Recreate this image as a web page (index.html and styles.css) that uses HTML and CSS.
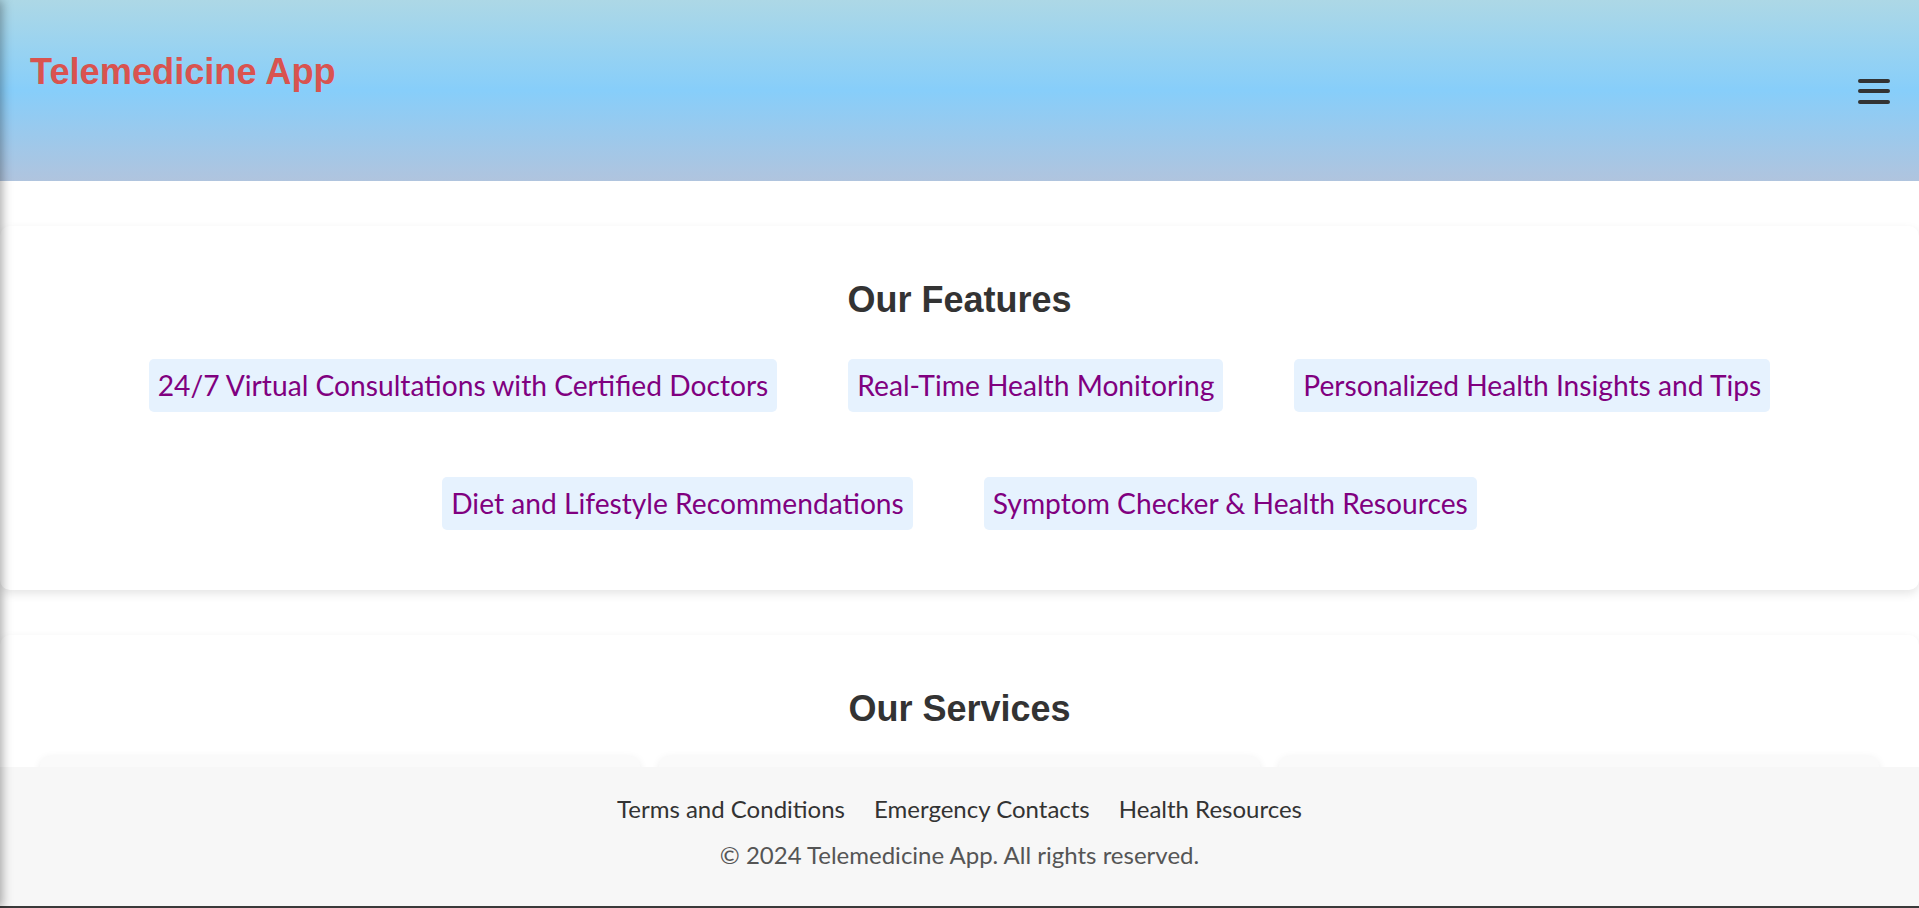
FILE: index.html
```html
<!DOCTYPE html>
<html lang="en">
<head>
<meta charset="utf-8">
<title>Telemedicine App</title>
<link rel="stylesheet" href="styles.css">
</head>
<body>
<aside class="sidenav" aria-hidden="true"></aside>
<header class="site-header">
  <h1 class="brand">Telemedicine App</h1>
  <button class="menu-btn" aria-label="Menu">
    <svg width="32" height="28" viewBox="0 0 32 28"><g stroke="#333" stroke-width="4" stroke-linecap="round"><line x1="2" y1="4" x2="30" y2="4"/><line x1="2" y1="14" x2="30" y2="14"/><line x1="2" y1="25" x2="30" y2="25"/></g></svg>
  </button>
</header>
<main class="content">
  <section class="card">
    <h2 class="card-title">Our Features</h2>
    <ul class="feature-list">
      <li class="feature">24/7 Virtual Consultations with Certified Doctors</li>
      <li class="feature">Real-Time Health Monitoring</li>
      <li class="feature">Personalized Health Insights and Tips</li>
      <li class="feature">Diet and Lifestyle Recommendations</li>
      <li class="feature">Symptom Checker &amp; Health Resources</li>
    </ul>
  </section>
  <section class="card">
    <h2 class="card-title">Our Services</h2>
    <div class="service-grid">
      <article class="service"></article>
      <article class="service"></article>
      <article class="service"></article>
    </div>
  </section>
</main>
<footer class="site-footer">
  <nav class="footer-links">
    <a href="#">Terms and Conditions</a>
    <a href="#">Emergency Contacts</a>
    <a href="#">Health Resources</a>
  </nav>
  <p class="copy">© 2024 Telemedicine App. All rights reserved.</p>
</footer>
</body>
</html>
```

FILE: styles.css
```css
* { box-sizing: border-box; }
html, body { margin: 0; padding: 0; }
body {
  font-family: "Lato", "Open Sans", sans-serif;
  background: #fff;
  color: #333;
  padding-bottom: 160px;
}
.sidenav {
  position: fixed;
  top: 0;
  left: -250px;
  width: 250px;
  height: 100%;
  background: #fff;
  box-shadow: 2px 0 10px rgba(0,0,0,0.35);
  z-index: 20;
}
.site-header {
  height: 181px;
  padding: 0 29px 0 30px;
  display: flex;
  justify-content: space-between;
  align-items: center;
  background: linear-gradient(to bottom, #add8e6, #87cefa, #b0c4de);
}
.brand {
  align-self: flex-start;
  margin: 51px 0 0;
  font-family: "Liberation Sans", Arial, sans-serif;
  font-weight: bold;
  font-size: 36.2px;
  line-height: normal;
  color: #d9534f;
}
.menu-btn {
  background: none;
  border: 0;
  padding: 0;
  width: 32px;
  height: 28px;
  display: flex;
}
.content { padding: 0; }
.card {
  margin: 45px 0;
  padding: 54px 0 60px;
  background: #fff;
  border-radius: 10px;
  box-shadow: 0 4px 10px rgba(0,0,0,0.1);
}
.card-title {
  margin: 0 0 39px;
  text-align: center;
  font-family: "Liberation Sans", Arial, sans-serif;
  font-weight: bold;
  font-size: 36px;
  line-height: 40px;
  color: #333;
}
.feature-list {
  list-style: none;
  margin: 0;
  padding: 0;
  display: flex;
  flex-wrap: wrap;
  justify-content: center;
  column-gap: 71px;
  row-gap: 65px;
}
.feature {
  background: #e6f2fe;
  color: #800080;
  border-radius: 5px;
  padding: 7px 9px;
  font-size: 28.2px;
  line-height: 39px;
}
.card-title + .service-grid { margin-top: -12px; }
.service-grid {
  display: grid;
  grid-template-columns: repeat(3, 1fr);
  gap: 19px;
  padding: 0 40px;
}
.service {
  background: #fafafa;
  border-radius: 10px;
  box-shadow: 0 2px 8px rgba(0,0,0,0.08);
  min-height: 220px;
}
.site-footer {
  position: fixed;
  left: 0;
  right: 0;
  bottom: 0;
  height: 141px;
  padding-top: 28px;
  background: #f7f7f7;
  border-bottom: 2px solid #3a3a3a;
  text-align: center;
  z-index: 10;
}
.footer-links {
  display: flex;
  justify-content: center;
  gap: 29px;
  line-height: 28px;
}
.footer-links a {
  color: #333;
  text-decoration: none;
  font-size: 24px;
}
.copy {
  margin: 18px 0 0;
  line-height: 28px;
  font-size: 24px;
  color: #555;
}
```
